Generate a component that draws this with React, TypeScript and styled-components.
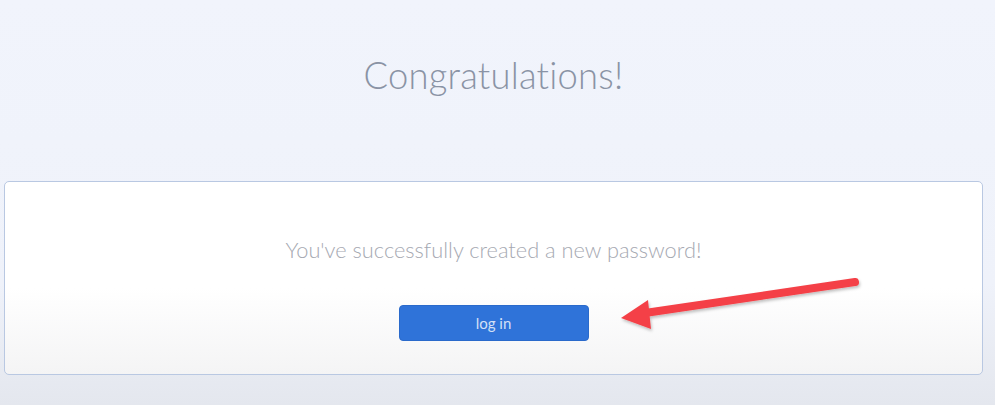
import React from "react";
import styled, { createGlobalStyle } from "styled-components";

const Global = createGlobalStyle`
  html, body { margin: 0; padding: 0; }
  body {
    width: 995px;
    height: 405px;
    overflow: hidden;
    background: linear-gradient(to bottom, #f1f4fc 0%, #eff2fa 70%, #e4e7ee 100%);
    font-family: Lato, "Open Sans", sans-serif;
  }
`;

const Page = styled.div`
  width: 995px;
  height: 405px;
  display: flex;
  flex-direction: column;
  align-items: center;
  box-sizing: border-box;
  padding: 0 12px 0 4px;
`;

const Title = styled.h1`
  margin: 51px 0 0 0;
  height: 130px;
  font-family: Lato, sans-serif;
  font-weight: 300;
  font-size: 36.4px;
  line-height: 48px;
  color: #8a93a5;
  letter-spacing: 0.2px;
`;

const Card = styled.div`
  position: relative;
  width: 100%;
  height: 194px;
  box-sizing: border-box;
  border: 1.5px solid #b9c8e2;
  border-radius: 5px;
  background: linear-gradient(to bottom, #ffffff 0%, #ffffff 55%, #f4f4f5 100%);
  display: flex;
  flex-direction: column;
  align-items: center;
  padding-top: 55px;
`;

const Message = styled.p`
  margin: 0;
  font-family: Lato, sans-serif;
  font-weight: 300;
  font-size: 21.8px;
  line-height: 26px;
  color: #a6a9b2;
`;

const Button = styled.button`
  margin-top: 42px;
  width: 190px;
  height: 36px;
  border: 1px solid #2a6acb;
  border-radius: 4px;
  background: #2f73d9;
  color: #d3e0f6;
  font-family: Lato, sans-serif;
  font-weight: 400;
  font-size: 15px;
  cursor: pointer;
  padding: 0;
`;

const ArrowSvg = styled.svg`
  position: absolute;
  left: 610px;
  top: 85px;
  overflow: visible;
`;

function Arrow() {
  return (
    <ArrowSvg width="260" height="70" viewBox="0 0 260 70">
      <defs>
        <filter id="sh" x="-20%" y="-50%" width="140%" height="200%">
          <feDropShadow dx="1" dy="2" stdDeviation="1.5" floodColor="#000" floodOpacity="0.25" />
        </filter>
      </defs>
      <g filter="url(#sh)" transform="translate(-610,-85)">
        <line x1="850" y1="100" x2="640" y2="131" stroke="#f44147" strokeWidth="8" strokeLinecap="round" />
        <polygon points="616,136 643,118 646,147" fill="#f44147" />
      </g>
    </ArrowSvg>
  );
}

export default function App() {
  return (
    <>
      <Global />
      <Page>
        <Title>Congratulations!</Title>
        <Card>
          <Message>You've successfully created a new password!</Message>
          <Button>log in</Button>
          <Arrow />
        </Card>
      </Page>
    </>
  );
}
